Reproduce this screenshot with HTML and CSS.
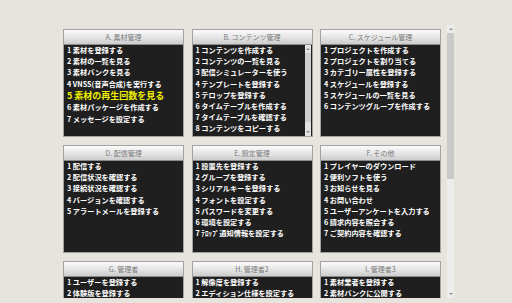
FILE: index.html
```html
<!DOCTYPE html>
<html lang="ja">
<head>
    <meta charset="UTF-8">
    <meta name="viewport" content="width=device-width, initial-scale=1.0">
    <title>メニュー</title>
    <link rel="stylesheet" href="styles.css">
</head>
<body>
    <div class="menu-frame">
        <div class="menu-view">
            <div class="menu-grid">
                <div class="menu-box">
                    <div class="menu-title">A. 素材管理</div>
                    <div class="menu-body">
                        <ul class="menu-list">
                            <li>1 素材を登録する</li>
                            <li>2 素材の一覧を見る</li>
                            <li>3 素材バンクを見る</li>
                            <li>4 VNSS(音声合成)を実行する</li>
                            <li class="hot">5 素材の再生回数を見る</li>
                            <li>6 素材パッケージを作成する</li>
                            <li>7 メッセージを設定する</li>
                        </ul>
                    </div>
                </div>
                <div class="menu-box">
                    <div class="menu-title">B. コンテンツ管理</div>
                    <div class="menu-body">
                        <ul class="menu-list">
                            <li>1 コンテンツを作成する</li>
                            <li>2 コンテンツの一覧を見る</li>
                            <li>3 配信シミュレーターを使う</li>
                            <li>4 テンプレートを登録する</li>
                            <li>5 テロップを登録する</li>
                            <li>6 タイムテーブルを作成する</li>
                            <li>7 タイムテーブルを確認する</li>
                            <li>8 コンテンツをコピーする</li>
                            <li>9 コンテンツを一括登録する</li>
                        </ul>
                        <div class="vscroll small">
                            <span class="arrow up"></span>
                            <div class="vscroll-track">
                                <div class="vscroll-thumb" style="height: 92%"></div>
                            </div>
                            <span class="arrow down"></span>
                        </div>
                    </div>
                </div>
                <div class="menu-box">
                    <div class="menu-title">C. スケジュール管理</div>
                    <div class="menu-body">
                        <ul class="menu-list">
                            <li>1 プロジェクトを作成する</li>
                            <li>2 プロジェクトを割り当てる</li>
                            <li>3 カテゴリー属性を登録する</li>
                            <li>4 スケジュールを登録する</li>
                            <li>5 スケジュールの一覧を見る</li>
                            <li>6 コンテンツグループを作成する</li>
                        </ul>
                    </div>
                </div>
                <div class="menu-box">
                    <div class="menu-title">D. 配信管理</div>
                    <div class="menu-body">
                        <ul class="menu-list">
                            <li>1 配信する</li>
                            <li>2 配信状況を確認する</li>
                            <li>3 接続状況を確認する</li>
                            <li>4 バージョンを確認する</li>
                            <li>5 アラートメールを登録する</li>
                        </ul>
                    </div>
                </div>
                <div class="menu-box">
                    <div class="menu-title">E. 設定管理</div>
                    <div class="menu-body">
                        <ul class="menu-list">
                            <li>1 設置先を登録する</li>
                            <li>2 グループを登録する</li>
                            <li>3 シリアルキーを登録する</li>
                            <li>4 フォントを設定する</li>
                            <li>5 パスワードを変更する</li>
                            <li>6 環境を設定する</li>
                            <li>7 ﾃﾛｯﾌﾟ通知情報を設定する</li>
                        </ul>
                    </div>
                </div>
                <div class="menu-box">
                    <div class="menu-title">F. その他</div>
                    <div class="menu-body">
                        <ul class="menu-list">
                            <li>1 プレイヤーのダウンロード</li>
                            <li>2 便利ソフトを使う</li>
                            <li>3 お知らせを見る</li>
                            <li>4 お問い合わせ</li>
                            <li>5 ユーザーアンケートを入力する</li>
                            <li>6 請求内容を照会する</li>
                            <li>7 ご契約内容を確認する</li>
                        </ul>
                    </div>
                </div>
                <div class="menu-box">
                    <div class="menu-title">G. 管理者</div>
                    <div class="menu-body">
                        <ul class="menu-list">
                            <li>1 ユーザーを登録する</li>
                            <li>2 体験版を登録する</li>
                            <li>3 ユーザーの一覧を見る</li>
                        </ul>
                    </div>
                </div>
                <div class="menu-box">
                    <div class="menu-title">H. 管理者2</div>
                    <div class="menu-body">
                        <ul class="menu-list">
                            <li>1 解像度を登録する</li>
                            <li>2 エディション仕様を設定する</li>
                            <li>3 機能制限を設定する</li>
                        </ul>
                    </div>
                </div>
                <div class="menu-box">
                    <div class="menu-title">I. 管理者3</div>
                    <div class="menu-body">
                        <ul class="menu-list">
                            <li>1 素材業者を登録する</li>
                            <li>2 素材バンクに公開する</li>
                            <li>3 素材バンクの一覧を見る</li>
                        </ul>
                    </div>
                </div>
            </div>
        </div>
        <div class="vscroll">
            <span class="arrow up"></span>
            <div class="vscroll-track">
                <div class="vscroll-thumb" style="height: 57%"></div>
            </div>
            <span class="arrow down"></span>
        </div>
    </div>
</body>
</html>
```

FILE: styles.css
```css
html, body {
    margin: 0;
    height: 100%;
    background-color: #e7e4de;
}
body {
    padding: 25px 0 0 59px;
    box-sizing: border-box;
    font-family: "Noto Sans CJK JP", "Noto Sans", sans-serif;
}
.menu-frame {
    display: flex;
    width: 395px;
    height: 273px;
}
.menu-view {
    flex: 1;
    overflow: hidden;
}
.menu-grid {
    display: grid;
    grid-template-columns: repeat(3, 121px);
    grid-auto-rows: 108px;
    column-gap: 7.5px;
    row-gap: 8px;
    padding: 4px 0 0 4px;
}
.menu-box {
    display: flex;
    flex-direction: column;
    border: 1px solid #a2a2a2;
    background-color: #1f1f1f;
    min-height: 0;
}
.menu-title {
    height: 14px;
    line-height: 14px;
    font-size: 7px;
    color: #7a7a7a;
    text-align: center;
    background: linear-gradient(#fbfbfb, #e4e4e4 55%, #cdcdcd);
    border-bottom: 1px solid #8c8c8c;
}
.menu-body {
    flex: 1;
    display: flex;
    min-height: 0;
}
.menu-list {
    flex: 1;
    margin: 0;
    padding: 0 0 0 3px;
    list-style: none;
    color: #fff;
    font-size: 7.2px;
    font-weight: bold;
    line-height: 11.2px;
    overflow: hidden;
    white-space: nowrap;
}
.menu-list .hot {
    color: #f2f200;
    font-size: 9px;
    line-height: 12.5px;
}

/* スクロールバー */
.vscroll {
    display: flex;
    flex-direction: column;
    align-items: center;
    width: 7px;
    background-color: #ededed;
}
.vscroll.small {
    width: 6px;
    margin-right: 1px;
    background-color: #e2e2e2;
}
.vscroll-track {
    flex: 1;
    width: 100%;
}
.vscroll-thumb {
    width: 100%;
    background-color: #c9c9c9;
}
.vscroll.small .vscroll-thumb {
    background-color: #cecece;
}
.arrow {
    display: flex;
    align-items: center;
    justify-content: center;
    height: 8px;
    width: 100%;
}
.arrow::before {
    content: "";
    border-left: 2px solid transparent;
    border-right: 2px solid transparent;
}
.arrow.up::before {
    border-bottom: 2px solid #8a8a8a;
}
.arrow.down::before {
    border-top: 2px solid #8a8a8a;
}
```
